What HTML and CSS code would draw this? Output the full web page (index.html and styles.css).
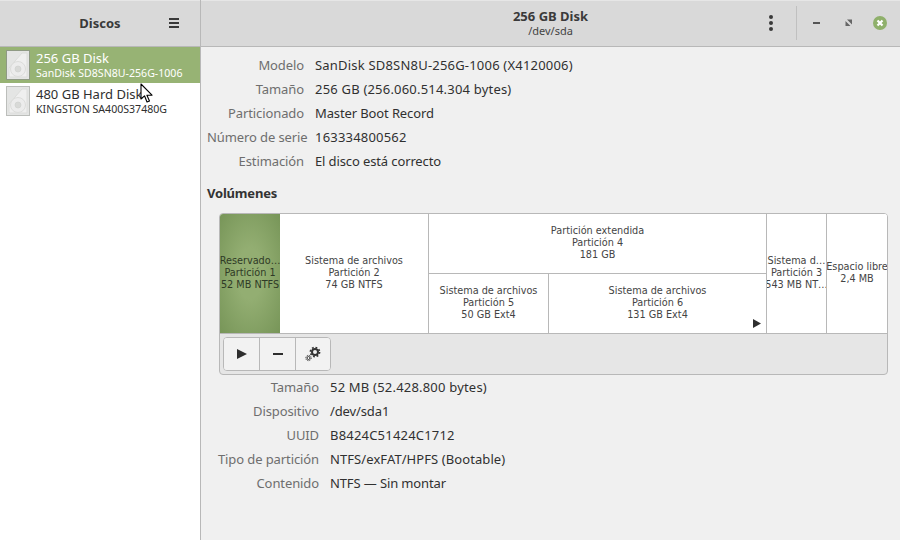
FILE: index.html
```html
<!DOCTYPE html>
<html lang="es">
<head>
<meta charset="utf-8">
<title>Discos</title>
<link rel="stylesheet" href="styles.css">
</head>
<body>
<div class="window">
  <aside class="sidebar">
    <header class="side-head">
      <span class="side-title">Discos</span>
      <svg class="hamburger" width="12" height="12" viewBox="0 0 12 12"><path d="M1 1h10v2H1zM1 5h10v2H1zM1 9h10v2H1z" fill="#3a3a3a"/></svg>
    </header>
    <ul class="disk-list">
      <li class="disk selected">
        <svg class="disk-icon" width="24" height="30" viewBox="0 0 24 30"><rect x=".5" y=".5" width="23" height="29" fill="#e4e5e4" stroke="#8f9a84"/><path d="M3 18 16 3h5v24H4.500a1.500 1.500 0 0 1-1.500-1.500z" fill="#efefef" stroke="#dcdddb"/><circle cx="12" cy="19" r="7.500" fill="#ececec" stroke="#dcdddb"/><circle cx="12" cy="19" r="3" fill="#d8d9d7" stroke="#cdcecc" stroke-width=".6"/></svg>
        <div class="disk-text"><div class="disk-name">256 GB Disk</div><div class="disk-model">SanDisk SD8SN8U-256G-1006</div></div>
      </li>
      <li class="disk">
        <svg class="disk-icon" width="24" height="30" viewBox="0 0 24 30"><rect x=".5" y=".5" width="23" height="29" fill="#e4e5e4" stroke="#bcbebb"/><path d="M3 18 16 3h5v24H4.500a1.500 1.500 0 0 1-1.500-1.500z" fill="#efefef" stroke="#dcdddb"/><circle cx="12" cy="19" r="7.500" fill="#ececec" stroke="#dcdddb"/><circle cx="12" cy="19" r="3" fill="#d8d9d7" stroke="#cdcecc" stroke-width=".6"/></svg>
        <div class="disk-text"><div class="disk-name">480 GB Hard Disk</div><div class="disk-model">KINGSTON SA400S37480G</div></div>
      </li>
    </ul>
  </aside>
  <main class="content">
    <header class="main-head">
      <div class="head-title"><div class="title">256 GB Disk</div><div class="subtitle">/dev/sda</div></div>
      <div class="head-actions">
        <svg class="kebab" width="6" height="18" viewBox="0 0 6 18"><circle cx="3" cy="3" r="2" fill="#3a3a3a"/><circle cx="3" cy="9" r="2" fill="#3a3a3a"/><circle cx="3" cy="15" r="2" fill="#3a3a3a"/></svg>
        <span class="head-sep"></span>
        <div class="win-controls">
          <svg width="8" height="8" viewBox="0 0 8 8"><rect y="3" width="7" height="2" fill="#555"/></svg>
          <svg width="8" height="8" viewBox="0 0 8 8"><path d="M2 .5H7V5.500zM.5 2V7H5.500z" fill="#666"/></svg>
          <svg width="16" height="16" viewBox="0 0 16 16"><circle cx="8" cy="8" r="7" fill="#8fb06b"/><path d="M5.500 5.500l5 5M10.500 5.500l-5 5" stroke="#fff" stroke-width="2.200"/></svg>
        </div>
      </div>
    </header>
    <section class="details">
      <dl class="props disk-props">
        <dt>Modelo</dt><dd class="num">SanDisk SD8SN8U-256G-1006 (X4120006)</dd>
        <dt>Tamaño</dt><dd class="num">256 GB (256.060.514.304 bytes)</dd>
        <dt>Particionado</dt><dd class="txt">Master Boot Record</dd>
        <dt>Número de serie</dt><dd class="num">163334800562</dd>
        <dt>Estimación</dt><dd class="txt">El disco está correcto</dd>
      </dl>
      <h2 class="section-title">Volúmenes</h2>
      <div class="volumes">
        <div class="graph">
          <div class="part p1 active"><span>Reservado…</span><span>Partición 1</span><span>52 MB NTFS</span></div>
          <div class="part p2"><span>Sistema de archivos</span><span>Partición 2</span><span>74 GB NTFS</span></div>
          <div class="ext">
            <div class="part ext-top"><span>Partición extendida</span><span>Partición 4</span><span>181 GB</span></div>
            <div class="ext-bottom">
              <div class="part p5"><span>Sistema de archivos</span><span>Partición 5</span><span>50 GB Ext4</span></div>
              <div class="part p6"><span>Sistema de archivos</span><span>Partición 6</span><span>131 GB Ext4</span>
                <svg class="marker" width="8" height="9" viewBox="0 0 8 9"><path d="M0 0l8 4.500L0 9z" fill="#2e2e2e"/></svg>
              </div>
            </div>
          </div>
          <div class="part p3"><span>Sistema d…</span><span>Partición 3</span><span>543 MB NT…</span></div>
          <div class="part p7"><span>Espacio libre</span><span>2,4 MB</span></div>
        </div>
        <div class="toolbar">
          <div class="btn-group">
            <button class="tool"><svg width="10" height="10" viewBox="0 0 10 10"><path d="M0 0l10 5L0 10z" fill="#2e2e2e"/></svg></button>
            <button class="tool"><svg width="10" height="2" viewBox="0 0 10 2"><rect width="10" height="2" fill="#2e2e2e"/></svg></button>
            <button class="tool"><svg width="16" height="16" viewBox="0 0 16 16"><g fill="none" stroke="#333"><circle cx="10" cy="6" r="3" stroke-width="2"/><circle cx="10" cy="6" r="4.600" stroke-width="1.600" stroke-dasharray="1.800 1.800"/><circle cx="3.500" cy="12" r="1.500" stroke-width="1"/><circle cx="3.500" cy="12" r="2.700" stroke-width="1" stroke-dasharray="1.100 1.020"/></g></svg></button>
          </div>
        </div>
      </div>
      <dl class="props part-props">
        <dt>Tamaño</dt><dd class="num">52 MB (52.428.800 bytes)</dd>
        <dt>Dispositivo</dt><dd class="txt">/dev/sda1</dd>
        <dt>UUID</dt><dd class="num">B8424C51424C1712</dd>
        <dt>Tipo de partición</dt><dd class="mid">NTFS/exFAT/HPFS (Bootable)</dd>
        <dt>Contenido</dt><dd class="txt">NTFS — Sin montar</dd>
      </dl>
    </section>
  </main>
  <svg class="cursor" width="14" height="21" viewBox="0 0 14 21"><path d="M1 1v15l3.500-3.200L7 19l2.500-1-2.600-5.800H12z" fill="#fff" stroke="#000" stroke-width="1.100" stroke-linejoin="round"/></svg>
</div>
</body>
</html>
```

FILE: styles.css
```css
* { box-sizing: border-box; }
html, body { margin: 0; padding: 0; }
body { font-family: "Noto Sans", sans-serif; font-size: 13px; color: #303030; }
.window { position: relative; display: flex; width: 900px; height: 540px; overflow: hidden; background: #f0f0f0; }

.sidebar { width: 201px; flex: none; background: #fff; border-right: 1px solid #b8b8b8; }
.side-head { position: relative; height: 47px; display: flex; align-items: center; justify-content: center; padding-bottom: 2px; background: #d9d9d9; border-bottom: 1px solid #b8b8b8; border-top: 1px solid #e6e6e6; }
.side-title { font-weight: 700; color: #3a3a3a; font-size: 13px; }
.hamburger { position: absolute; left: 168px; top: 16px; }
.disk-list { list-style: none; margin: 0; padding: 0; }
.disk { height: 36px; display: flex; align-items: center; gap: 6px; padding-left: 6px; color: #2f2f2f; }
.disk.selected { background: #97b374; color: #fff; }
.disk-text { line-height: 14px; white-space: nowrap; }
.disk-name { font-size: 13px; line-height: 15px; }
.disk-model { font-size: 10.600px; line-height: 14px; }

.content { flex: 1; min-width: 0; display: flex; flex-direction: column; }
.main-head { position: relative; height: 47px; display: flex; justify-content: center; align-items: center; padding-bottom: 2px; background: #d9d9d9; border-bottom: 1px solid #b8b8b8; border-top: 1px solid #e6e6e6; }
.head-title { text-align: center; }
.title { font-weight: 700; font-size: 13px; line-height: 16px; color: #3a3a3a; }
.subtitle { font-size: 11px; line-height: 14px; color: #444; }
.head-actions { position: absolute; left: 567px; top: 5px; height: 34px; display: flex; align-items: center; }
.kebab { margin-right: 22px; }
.head-sep { width: 1px; height: 34px; background: #c0c0c0; }
.win-controls { display: flex; align-items: center; margin-left: 16px; gap: 24px; }
.win-controls svg:last-child { margin-left: -5px; }

.details { flex: 1; padding: 6px 0 0 6px; }
.props { display: grid; grid-auto-rows: 24px; align-items: center; column-gap: 11px; margin: 0; font-size: 13px; }
.props dt { color: #6e6e6e; text-align: right; white-space: nowrap; letter-spacing: -.1px; }
.props dd { margin: 0; color: #303030; white-space: nowrap; }
.props .num { letter-spacing: .2px; }
.props .mid { letter-spacing: .08px; }
.props .txt { letter-spacing: -.12px; }
.disk-props { grid-template-columns: 97px 1fr; }
.part-props { grid-template-columns: 112px 1fr; }
.section-title { margin: 8px 0 0; font-size: 13px; line-height: 24px; font-weight: 700; color: #333; letter-spacing: -.2px; }

.volumes { width: 669px; margin: 8px 0 0 12px; border: 1px solid #b8b8b8; border-radius: 4px; background: #e6e6e6; overflow: hidden; }
.graph { display: flex; height: 120px; background: #fff; border-bottom: 1px solid #b8b8b8; }
.part { display: flex; flex-direction: column; align-items: center; justify-content: center; padding-bottom: 2px; font-family: "DejaVu Sans", sans-serif; font-size: 9.700px; line-height: 12px; color: #444; background: #fff; white-space: nowrap; overflow: hidden; position: relative; }
.p1 { width: 60px; }
.p1.active { background: radial-gradient(ellipse at center, #93ae72 30%, #779558 100%); color: #2f3a26; }
.p2 { width: 149px; border-right: 1px solid #b8b8b8; }
.ext { width: 338px; display: flex; flex-direction: column; border-right: 1px solid #b8b8b8; }
.ext-top { height: 60px; border-bottom: 1px solid #b8b8b8; }
.ext-bottom { height: 59px; display: flex; }
.p5 { width: 120px; border-right: 1px solid #b8b8b8; }
.p6 { flex: 1; }
.p3 { width: 60px; border-right: 1px solid #b8b8b8; }
.p7 { flex: 1; min-width: 0; }
.marker { position: absolute; right: 5px; bottom: 5px; }

.toolbar { height: 40px; padding: 3px 0 0 3px; }
.btn-group { display: inline-flex; height: 34px; border: 1px solid #b8b8b8; border-radius: 4px; background: #f2f2f2; overflow: hidden; }
.tool { width: 36px; height: 32px; padding: 0; border: 0; border-right: 1px solid #b8b8b8; background: #f2f2f2; display: flex; align-items: center; justify-content: center; }
.tool:last-child { border-right: 0; width: 34px; }
.cursor { position: absolute; left: 140px; top: 83px; }
```
